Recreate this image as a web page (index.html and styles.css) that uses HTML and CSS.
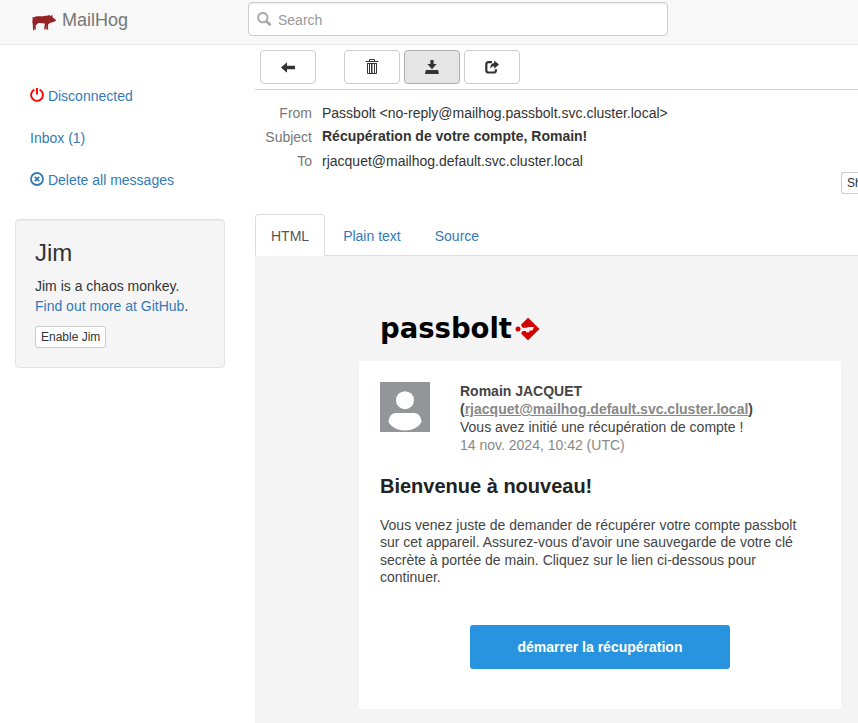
FILE: index.html
```html
<!DOCTYPE html>
<html lang="fr">
<head>
<meta charset="utf-8">
<title>MailHog</title>
<link rel="stylesheet" href="styles.css">
</head>
<body>
<header class="navbar">
  <a class="brand">
    <svg class="pig" width="26" height="18" viewBox="0 0 26 18"><path fill="#952225" d="M1.8 4.8 1 3 2.2 3.5C3.6 2.4 7 2 10 2.2C12.5 2.4 14 1.6 16 1.8L18.6 1 19.4 2.3 21.3 .8 21.7 3.6 25 6 24.4 7.2 20.5 8.4 18 9.6 17 10.8 17.2 15.4 15.4 15.8 15.3 11 14.8 15 13 15.6 13.9 9.6C11.5 9 8.2 8.9 7 9.2L4.6 11.600 5 15.5H3.8L3.2 12.7 3.4 16.2H2L1.8 10.2C1.200 8.7 1.200 6 1.8 4.8Z"/></svg>
    <span>MailHog</span>
  </a>
  <label class="search">
    <svg width="15" height="15" viewBox="0 0 15 15" fill="none" stroke="#aaa"><circle cx="5.8" cy="5.6" r="4.7" stroke-width="2"/><path d="M9 9l4.6 4.2" stroke-width="2.8"/></svg>
    <span>Search</span>
  </label>
</header>
<div class="page">
  <nav class="sidebar">
    <ul class="menu">
      <li><svg width="14" height="14" viewBox="0 0 14 14" fill="none" stroke="#f00" stroke-width="1.9"><path d="M4.4 1.7a5.9 5.9 0 1 0 5.2 0M7 0v6.6"/></svg> <a>Disconnected</a></li>
      <li><a>Inbox (1)</a></li>
      <li><svg width="14" height="14" viewBox="0 0 14 14" fill="none" stroke="#337ab7"><circle cx="7" cy="7" r="6" stroke-width="1.8"/><path d="M4.8 4.8l4.4 4.4M9.2 4.8L4.8 9.2" stroke-width="1.9"/></svg> <a>Delete all messages</a></li>
    </ul>
    <section class="jim">
      <h3>Jim</h3>
      <p>Jim is a chaos monkey.<br><a>Find out more at GitHub</a>.</p>
      <button class="small">Enable Jim</button>
    </section>
  </nav>
  <main>
    <div class="toolbar">
      <button class="tool back"><svg width="14" height="14" viewBox="0 0 14 14"><path fill="#333" d="M0 7.5 6 2.200v3.500h8V9.300H6v3.500Z"/></svg></button>
      <button class="tool"><svg width="14" height="16" viewBox="0 0 14 16" fill="none" stroke="#333"><path d="M.5 2.5h13M4.5 2V.5h5V2M2 4.5h10M2.5 4.5v10h9v-10M4.5 5v9M6.5 5v9M9.5 5v9"/><path d="M7.5 5v9" stroke="#999"/></svg></button>
      <button class="tool active"><svg width="14" height="14" viewBox="0 0 14 14"><path fill="#333" d="M5.4 0h3.2v4h3L7 9.2 2.4 4h3ZM.8 10h12.4l.6 4H0Z"/></svg></button>
      <button class="tool"><svg width="14" height="14" viewBox="0 0 14 14"><path fill="none" stroke="#333" stroke-width="2.2" d="M7 2.1H3.7Q1.3 2.1 1.3 4.3v5.9q0 2.3 2.4 2.3h5q2.2 0 2.2-2.3V9.2"/><path fill="#333" d="M9.2 .4l4.8 4.2-4.8 4.2V6.2Q6.8 6.2 5.2 8.4 5.2 3.3 9.2 3Z"/></svg></button>
    </div>
    <div class="headers">
      <dl>
        <dt>From</dt><dd>Passbolt &lt;no-reply@mailhog.passbolt.svc.cluster.local&gt;</dd>
        <dt>Subject</dt><dd class="subject">Récupération de votre compte, Romain!</dd>
        <dt>To</dt><dd>rjacquet@mailhog.default.svc.cluster.local</dd>
      </dl>
      <button class="small show">Sh</button>
    </div>
    <div class="tabs"><a class="tab current">HTML</a><a class="tab">Plain text</a><a class="tab">Source</a></div>
    <div class="preview">
      <svg class="logo" width="162" height="36" viewBox="0 0 162 36">
        <text x="0" y="25" textLength="132" lengthAdjust="spacingAndGlyphs">passbolt</text>
        <circle cx="138" cy="16" r="2.5" fill="#d40101"/>
        <path fill="#d40101" d="M141 11.8 148 4.7 159.5 16 148 27.3 141 20.4 142.5 18H146V19.3H149.5V17.6H152.5L154 14H147.5V14.8H142.5Z"/>
      </svg>
      <article>
        <div class="person">
          <svg width="50" height="50" viewBox="0 0 50 50"><path fill="#939598" d="M0 0h50v50H0z"/><circle cx="25" cy="18.2" r="9" fill="#fff"/><path fill="#fff" d="M16 31h18c5 0 7.500 5 7.500 9-3 5.500-9.500 8.500-16.500 8.500s-13.500-3-16.500-8.500c0-4 2.500-9 7.500-9Z"/></svg>
          <div><b>Romain JACQUET<br>(<a>rjacquet@mailhog.default.svc.cluster.local</a>)</b><br>Vous avez initié une récupération de compte !<br><span class="date">14 nov. 2024, 10:42 (UTC)</span></div>
        </div>
        <h2>Bienvenue à nouveau!</h2>
        <p>Vous venez juste de demander de récupérer votre compte passbolt sur cet appareil. Assurez-vous d'avoir une sauvegarde de votre clé secrète à portée de main. Cliquez sur le lien ci-dessous pour continuer.</p>
        <a class="cta">démarrer la récupération</a>
      </article>
    </div>
  </main>
</div>
</body>
</html>
```
FILE: styles.css
```css
* { box-sizing: border-box; }
body {
  margin: 0;
  height: 723px;
  overflow: hidden;
  font: 14px/20px "Liberation Sans", Arial, sans-serif;
  color: #333;
  background: #fff;
}
a { color: #337ab7; text-decoration: none; }
button { font: inherit; color: #333; background: #fff; border: 1px solid #ccc; }
.navbar {
  display: flex;
  height: 45px;
  background: #f8f8f8;
  border-bottom: 1px solid #e7e7e7;
}
.brand {
  display: flex;
  width: 248px;
  padding: 10px 0 0 31px;
  font-size: 18px;
  color: #777;
}
.pig { margin: 4px 5px 0 0; }
.search {
  display: flex;
  gap: 6px;
  width: 420px;
  height: 34px;
  margin-top: 2px;
  padding: 7px 8px;
  color: #999;
  background: #fff;
  border: 1px solid #ccc;
  border-radius: 4px;
  box-shadow: inset 0 1px 1px rgba(0, 0, 0, .075);
}
.search svg { margin-top: 2px; }
.page { display: flex; }
.sidebar { flex: none; width: 255px; padding: 31px 30px 0 15px; }
.menu { list-style: none; margin: 0 0 19px; padding: 0; }
.menu li { height: 40px; margin-bottom: 2px; padding: 10px 15px; white-space: nowrap; }
.menu svg { vertical-align: -1px; }
.jim {
  height: 149px;
  padding: 20px 19px 19px;
  background: #f5f5f5;
  border: 1px solid #e3e3e3;
  border-radius: 4px;
  box-shadow: inset 0 1px 1px rgba(0, 0, 0, .05);
}
.jim h3 { margin: 0 0 10px; font-size: 24px; line-height: 26px; font-weight: 400; }
.jim p { margin: 0 0 10px; }
.small {
  display: block;
  height: 22px;
  padding: 1px 5px;
  font-size: 12px;
  line-height: 18px;
  border-radius: 3px;
}
main { flex: 1; min-width: 0; }
.toolbar {
  display: flex;
  gap: 4px;
  height: 45px;
  padding: 5px 5px 0;
  border-bottom: 1px solid #ccc;
}
.tool {
  display: flex;
  align-items: center;
  justify-content: center;
  width: 56px;
  height: 34px;
  padding: 0;
  border-radius: 4px;
}
.back { margin-right: 24px; }
.active { background: #e6e6e6; border-color: #adadad; }
.headers { display: flex; height: 124px; padding-top: 13px; }
dl {
  flex: none;
  display: grid;
  grid-template-columns: 57px 1fr;
  grid-template-rows: 24px 24px 24px;
  column-gap: 10px;
  width: 586px;
  height: 72px;
  margin: 0;
}
dt { text-align: right; color: #777; }
dd { margin: 0; }
.subject { font-weight: 700; margin-top: -1px; }
.show {
  width: 17px;
  margin-top: 69px;
  padding-right: 0;
  overflow: hidden;
  border-right: 0;
  border-radius: 3px 0 0 3px;
}
.tabs { display: flex; height: 42px; border-bottom: 1px solid #ddd; }
.tab { height: 42px; margin-right: 2px; padding: 12px 16px; }
.current {
  padding: 11px 15px;
  color: #555;
  background: #fff;
  border: 1px solid #ddd;
  border-bottom-color: #fff;
  border-radius: 4px 4px 0 0;
}
.preview { height: 467px; padding: 55px 17px 0 104px; background: #f4f4f4; }
.logo { display: block; margin: 2px 0 12px 21px; }
.logo text { font: 700 28px "DejaVu Sans", sans-serif; fill: #000; }
article {
  width: 482px;
  height: 348px;
  padding: 21px;
  line-height: 17.5px;
  color: #444;
  background: #fff;
  border-radius: 3px;
}
.person { display: flex; gap: 30px; line-height: 18px; }
.person a { color: #888; text-decoration: underline; }
.date { color: #888; }
h2 { margin: 20px 0 18.7px; font-size: 20px; line-height: 24px; color: #222; }
article p { width: 430px; margin: 0; }
.cta {
  display: block;
  width: 260px;
  height: 44px;
  margin: 38.3px auto 0;
  line-height: 44px;
  text-align: center;
  font-weight: 700;
  color: #fff;
  background: #2894df;
  border-radius: 3px;
}
```
